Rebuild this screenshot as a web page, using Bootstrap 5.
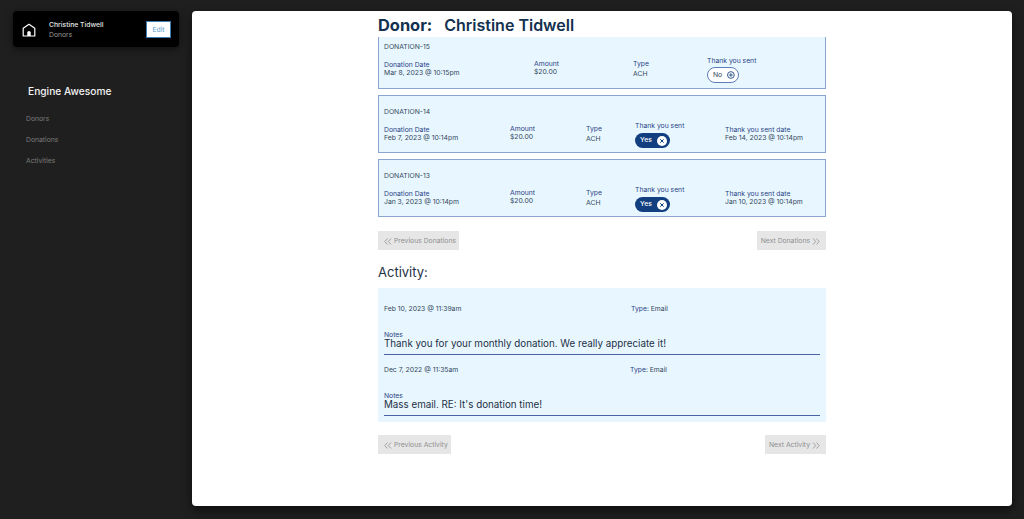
<!DOCTYPE html>
<html lang="en">
<head>
    <meta charset="UTF-8">
    <meta name="viewport" content="width=device-width, initial-scale=1.0">
    <title>Donor</title>
    <link href="https://cdn.jsdelivr.net/npm/bootstrap@5.3.0/dist/css/bootstrap.min.css" rel="stylesheet">
    <style>
        html, body { height: 100%; }
        body {
            background-color: #1f1f1f;
            font-family: Inter, "Liberation Sans", sans-serif;
            color: #1d3045;
            overflow: hidden;
        }
        .app-shell { height: 519px; padding: 11px 12px 13px 13px; }
        .side-col { width: 166px; margin-right: 13px; flex-shrink: 0; }
        .user-box {
            background: #000;
            height: 36px;
            border-radius: 4px;
            box-shadow: 0 2px 6px rgba(0,0,0,.5);
            padding: 0 8px 0 9px;
            color: #e8e8e8;
        }
        .house-icon { margin-top: 1px; flex-shrink: 0; }
        .user-text { margin-left: 13px; padding-top: 2px; }
        .user-name { font-size: 6.8px; font-weight: 500; line-height: 10px; }
        .user-sub { font-size: 6.8px; color: #9a9a9a; line-height: 10px; }
        .edit-btn {
            background: #fff;
            border: 1px solid #3d7cb5;
            color: #5b9bd0;
            font-size: 6.8px;
            width: 25px;
            height: 17px;
            line-height: 15px;
            text-align: center;
            margin-left: auto;
        }
        .brand-name { color: #f2f2f2; font-size: 10.2px; font-weight: 500; margin: 37px 0 0 15px; line-height: 14px; }
        .side-links { margin: 16px 0 0 13px; }
        .side-links a { display: block; color: #7c7c7c; font-size: 6.8px; line-height: 9px; margin-bottom: 12px; text-decoration: none; }
        .main-panel {
            flex: 1;
            background: #fff;
            border-radius: 4px;
            box-shadow: 0 4px 10px rgba(0,0,0,.6);
            overflow: hidden;
        }
        .main-inner { width: 448px; margin-left: 186px; }
        .donor-title { font-size: 16.4px; font-weight: 700; color: #12304f; line-height: 26px; margin: 1px 0 0 0; height: 25px; }
        .donor-title span { margin-left: 8px; font-size: 16px; font-weight: 600; }
        .gift-box {
            background: #e8f7ff;
            border: 1px solid #8aa5d0;
            height: 58px;
            margin-bottom: 6px;
            padding: 0 5px;
        }
        .gift-box.clipped { height: 52px; border-top: 0; }
        .gift-id { font-size: 6.8px; color: #33475c; line-height: 9px; padding-top: 11px; }
        .clipped .gift-id { padding-top: 5px; }
        .gift-row { display: grid; align-items: start; margin-top: 5px; }
        .cols-four { grid-template-columns: 150px 99px 74px 1fr; }
        .cols-five { grid-template-columns: 126px 76px 49px 90px 1fr; }
        .field-label { font-size: 6.8px; color: #2a3f85; line-height: 9px; }
        .field-val { font-size: 6.8px; color: #33475c; line-height: 8px; }
        .drop-4 { padding-top: 4px; }
        .drop-3 { padding-top: 3px; }
        .type-val { margin-top: 2px; }
        .pill-on, .pill-off {
            display: flex;
            align-items: center;
            gap: 5px;
            border-radius: 8px;
            font-size: 6.8px;
            margin-top: 3px;
            padding: 0 3px 0 5px;
        }
        .pill-on { background: #123f7f; color: #fff; width: 35px; height: 15px; font-weight: 500; }
        .pill-off { background: #fff; border: 1px solid #5c7db5; color: #33475c; width: 32px; height: 16px; margin-top: 2px; }
        .pager-row { margin-top: 14px; }
        .pager-row.tail-row { margin-top: 13px; }
        .pager-btn {
            background: #e6e6e6;
            color: #8f8f8f;
            font-size: 6.8px;
            height: 19px;
            display: inline-flex;
            align-items: center;
            gap: 2px;
            padding: 1px 3px 0 6px;
        }
        .pager-btn.to-next { padding: 1px 6px 0 4px; }
        .section-title { font-size: 13px; color: #1d3045; font-weight: 400; line-height: 16px; margin: 14px 0 8px 0; }
        .activity-box { background: #e8f7ff; height: 134px; padding: 0 6px; }
        .act-top { font-size: 6.8px; color: #33475c; line-height: 9px; display: flex; padding-top: 10px; }
        .act-top.first-item { padding-top: 16px; }
        .act-top b { font-weight: 400; color: #2a3f85; }
        .act-date { width: 247px; }
        .act-date.second-item { width: 246px; }
        .act-notes { font-size: 6.8px; color: #2a3f85; line-height: 8px; margin-top: 18px; }
        .act-text { font-size: 9.8px; color: #1d3045; line-height: 10px; padding-bottom: 5px; border-bottom: 1px solid #4c62a6; }
    </style>
</head>
<body>
<div class="app-shell d-flex">
    <div class="side-col">
        <div class="user-box d-flex align-items-center">
            <svg class="house-icon" width="14" height="14" viewBox="0 0 14 14" fill="none" stroke="#fff" stroke-width="1.2" stroke-linejoin="round"><path d="M1.2 5.3 7 1.3l5.8 4V13H1.2z"/><path d="M5.3 13V9.6a1.7 1.7 0 0 1 3.4 0V13z" fill="#fff" stroke="none"/></svg>
            <div class="user-text">
                <div class="user-name">Christine Tidwell</div>
                <div class="user-sub">Donors</div>
            </div>
            <div class="edit-btn">Edit</div>
        </div>
        <div class="brand-name">Engine Awesome</div>
        <div class="side-links">
            <a href="#">Donors</a>
            <a href="#">Donations</a>
            <a href="#">Activities</a>
        </div>
    </div>
    <div class="main-panel">
        <div class="main-inner">
            <h1 class="donor-title">Donor: <span>Christine Tidwell</span></h1>

            <div class="gift-box clipped">
                <div class="gift-id">DONATION-15</div>
                <div class="gift-row cols-four">
                    <div class="drop-4"><div class="field-label">Donation Date</div><div class="field-val">Mar 8, 2023 @ 10:15pm</div></div>
                    <div class="drop-3"><div class="field-label">Amount</div><div class="field-val">$20.00</div></div>
                    <div class="drop-3"><div class="field-label">Type</div><div class="field-val type-val">ACH</div></div>
                    <div><div class="field-label">Thank you sent</div>
                        <span class="pill-off">No <svg width="10" height="10" viewBox="0 0 10 10" fill="none" stroke="#123f7f" stroke-width="1.1"><circle cx="5" cy="5" r="4.3"/><path d="M5 2.6v4.8M2.6 5h4.8"/></svg></span></div>
                </div>
            </div>

            <div class="gift-box">
                <div class="gift-id">DONATION-14</div>
                <div class="gift-row cols-five">
                    <div class="drop-4"><div class="field-label">Donation Date</div><div class="field-val">Feb 7, 2023 @ 10:14pm</div></div>
                    <div class="drop-3"><div class="field-label">Amount</div><div class="field-val">$20.00</div></div>
                    <div class="drop-3"><div class="field-label">Type</div><div class="field-val type-val">ACH</div></div>
                    <div><div class="field-label">Thank you sent</div>
                        <span class="pill-on">Yes <svg width="10" height="10" viewBox="0 0 10 10"><circle cx="5" cy="5" r="5" fill="#fff"/><path d="M3.3 3.3l3.4 3.4M6.7 3.3 3.3 6.7" stroke="#123f7f"/></svg></span></div>
                    <div class="drop-4"><div class="field-label">Thank you sent date</div><div class="field-val">Feb 14, 2023 @ 10:14pm</div></div>
                </div>
            </div>

            <div class="gift-box">
                <div class="gift-id">DONATION-13</div>
                <div class="gift-row cols-five">
                    <div class="drop-4"><div class="field-label">Donation Date</div><div class="field-val">Jan 3, 2023 @ 10:14pm</div></div>
                    <div class="drop-3"><div class="field-label">Amount</div><div class="field-val">$20.00</div></div>
                    <div class="drop-3"><div class="field-label">Type</div><div class="field-val type-val">ACH</div></div>
                    <div><div class="field-label">Thank you sent</div>
                        <span class="pill-on">Yes <svg width="10" height="10" viewBox="0 0 10 10"><circle cx="5" cy="5" r="5" fill="#fff"/><path d="M3.3 3.3l3.4 3.4M6.7 3.3 3.3 6.7" stroke="#123f7f"/></svg></span></div>
                    <div class="drop-4"><div class="field-label">Thank you sent date</div><div class="field-val">Jan 10, 2023 @ 10:14pm</div></div>
                </div>
            </div>

            <div class="pager-row d-flex justify-content-between">
                <div class="pager-btn"><svg width="8" height="7" viewBox="0 0 8 7" fill="none" stroke="#8f8f8f" stroke-width=".8"><path d="M3.5.5.8 3.5l2.7 3M7 .5 4.3 3.5 7 6.5"/></svg>Previous Donations</div>
                <div class="pager-btn to-next">Next Donations<svg width="8" height="7" viewBox="0 0 8 7" fill="none" stroke="#8f8f8f" stroke-width=".8"><path d="M1 .5l2.7 3-2.7 3M4.5.5l2.7 3-2.7 3"/></svg></div>
            </div>

            <h2 class="section-title">Activity:</h2>
            <div class="activity-box">
                <div class="act-top first-item"><div class="act-date">Feb 10, 2023 @ 11:39am</div><div><b>Type:</b> Email</div></div>
                <div class="act-notes">Notes</div>
                <div class="act-text">Thank you for your monthly donation. We really appreciate it!</div>
                <div class="act-top"><div class="act-date second-item">Dec 7, 2022 @ 11:35am</div><div><b>Type:</b> Email</div></div>
                <div class="act-notes">Notes</div>
                <div class="act-text">Mass email. RE: It's donation time!</div>
            </div>

            <div class="pager-row tail-row d-flex justify-content-between">
                <div class="pager-btn"><svg width="8" height="7" viewBox="0 0 8 7" fill="none" stroke="#8f8f8f" stroke-width=".8"><path d="M3.5.5.8 3.5l2.7 3M7 .5 4.3 3.5 7 6.5"/></svg>Previous Activity</div>
                <div class="pager-btn to-next">Next Activity<svg width="8" height="7" viewBox="0 0 8 7" fill="none" stroke="#8f8f8f" stroke-width=".8"><path d="M1 .5l2.7 3-2.7 3M4.5.5l2.7 3-2.7 3"/></svg></div>
            </div>
        </div>
    </div>
</div>
<script src="https://cdn.jsdelivr.net/npm/bootstrap@5.3.0/dist/js/bootstrap.bundle.min.js"></script>
</body>
</html>
